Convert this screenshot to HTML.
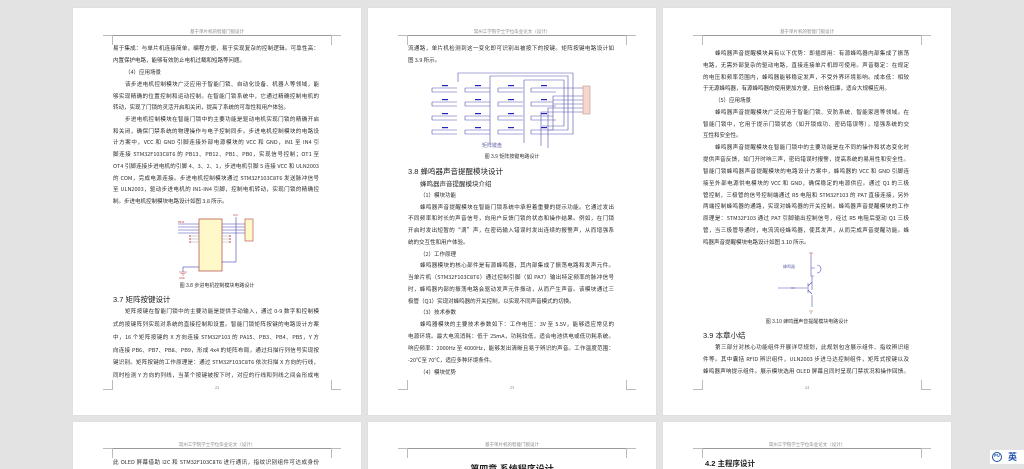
<!DOCTYPE html>
<html><head><meta charset="utf-8">
<style>
*{margin:0;padding:0;box-sizing:border-box}
html,body{width:1024px;height:469px;overflow:hidden}
body{background:#e3e3e3;font-family:"Liberation Serif","Noto Serif CJK SC","Noto Sans CJK SC",serif;position:relative}
.pg{position:absolute;width:288px;background:#fff;box-shadow:0 0 1px #ccc}
.hd{position:absolute;left:0;width:288px;text-align:center;font-size:4.5px;color:#888;font-family:"Liberation Sans","Noto Sans CJK SC",sans-serif}
.hl{position:absolute;left:40px;width:218px;border-top:0.8px solid #999}
.cn{position:absolute;width:10px;height:10px;border-color:#bbb;border-style:solid;border-width:0}
.l{position:absolute;left:40px;width:206px;font-size:5.5px;line-height:7px;color:#2a2a2a;text-align:justify;text-align-last:justify;white-space:nowrap;font-family:"Noto Sans CJK SC","Liberation Serif",sans-serif}
.l.e{text-align-last:left}
.l.i{left:52px;width:194px}
.h{position:absolute;font-size:7.5px;color:#222;font-family:"Liberation Sans","Noto Sans CJK SC",sans-serif}
.c{position:absolute;left:0;width:288px;text-align:center;font-size:5px;color:#333;font-family:"Liberation Sans","Noto Sans CJK SC",sans-serif}
.pn{position:absolute;left:0;width:288px;text-align:center;font-size:4.5px;color:#888}
</style></head><body>

<!-- PAGE 1 -->
<div class="pg" style="left:73px;top:8px;height:407px">
<div class="hd" style="top:21px">基于单片机的智能门锁设计</div>
<div class="hl" style="top:27px"></div>
<div class="cn" style="left:30px;top:27px;border-right-width:0.8px;border-top-width:0.8px"></div>
<div class="cn" style="left:258px;top:27px;border-left-width:0.8px;border-top-width:0.8px"></div>
<div class="l" style="top:37px">易于集成：与单片机连接简单，编程方便，易于实现复杂的控制逻辑。可靠性高：</div>
<div class="l e" style="top:49px">内置保护电路，能够有效防止电机过载和短路等问题。</div>
<div class="l e i" style="top:61px">（4）应用场景</div>
<div class="l i" style="top:73px">该步进电机控制模块广泛应用于智能门锁、自动化设备、机器人等领域，能</div>
<div class="l" style="top:85px">够实现精确的位置控制和运动控制。在智能门锁系统中，它通过精确控制电机的</div>
<div class="l e" style="top:96px">转动，实现了门锁的灵活开启和关闭，提高了系统的可靠性和用户体验。</div>
<div class="l i" style="top:108px">步进电机控制模块在智能门锁中的主要功能是驱动电机实现门锁的精确开启</div>
<div class="l" style="top:120px">和关闭，确保门禁系统的物理操作与电子控制同步。步进电机控制模块的电路设</div>
<div class="l" style="top:131px">计方案中，VCC 和 GND 引脚连接外部电源模块的 VCC 和 GND，IN1 至 IN4 引</div>
<div class="l" style="top:143px">脚连接 STM32F103C8T6 的 PB13、PB12、PB1、PB0，实现信号控制；OT1 至</div>
<div class="l" style="top:155px">OT4 引脚连接步进电机的引脚 4、3、2、1，步进电机引脚 5 连接 VCC 和 ULN2003</div>
<div class="l" style="top:167px">的 COM，完成电源连接。步进电机控制模块通过 STM32F103C8T6 发送脉冲信号</div>
<div class="l" style="top:178px">至 ULN2003，驱动步进电机的 IN1-IN4 引脚，控制电机转动，实现门锁的精确控</div>
<div class="l e" style="top:190px">制。步进电机控制模块电路设计如图 3.8 所示。</div>
<svg style="position:absolute;left:100px;top:205px" width="90" height="70" viewBox="0 0 90 70">
<rect x="26" y="6" width="23" height="52" fill="#fff8c8" stroke="#b04040" stroke-width="0.7"/>
<g stroke="#4040b0" stroke-width="0.6">
<line x1="5" y1="11" x2="26" y2="11"/><line x1="5" y1="14" x2="26" y2="14"/><line x1="5" y1="17" x2="26" y2="17"/><line x1="5" y1="20" x2="26" y2="20"/>
<line x1="49" y1="11" x2="73" y2="11"/><line x1="49" y1="14" x2="73" y2="14"/><line x1="49" y1="17" x2="73" y2="17"/><line x1="49" y1="20" x2="73" y2="20"/>
<line x1="63" y1="4" x2="63" y2="49"/><line x1="49" y1="49" x2="63" y2="49"/>
<line x1="10" y1="54" x2="26" y2="54"/><line x1="10" y1="54" x2="10" y2="59"/>
</g>
<g stroke="#888" stroke-width="0.4"><line x1="18" y1="23" x2="26" y2="23"/><line x1="18" y1="26" x2="26" y2="26"/><line x1="18" y1="29" x2="26" y2="29"/><line x1="49" y1="23" x2="56" y2="23"/><line x1="49" y1="26" x2="56" y2="26"/><line x1="49" y1="29" x2="56" y2="29"/></g>
<g stroke="#c04040" stroke-width="0.5"><path d="M16 22l2 2M18 22l-2 2M16 25l2 2M18 25l-2 2M16 28l2 2M18 28l-2 2M56 22l2 2M58 22l-2 2M56 25l2 2M58 25l-2 2M56 28l2 2M58 28l-2 2"/><path d="M6 59h8M7.5 60.5h5M9 62h2"/></g>
<rect x="72" y="6" width="8" height="22" fill="#fff8c8" stroke="#b04040" stroke-width="0.6"/>
<g fill="#c04040" font-size="2.5" font-family="Liberation Sans"><text x="5" y="10">PB13</text><text x="60" y="3">VCC</text><text x="6" y="66">GND</text></g>
</svg>
<div class="c" style="top:274px">图 3.8 步进电机控制模块电路设计</div>
<div class="h" style="left:40px;top:286px">3.7 矩阵按键设计</div>
<div class="l i" style="top:300px">矩阵按键在智能门锁中的主要功能是提供手动输入，通过 0-9 数字和控制模</div>
<div class="l" style="top:313px">式的按键阵列实现对系统的直接控制和设置。智能门锁矩阵按键的电路设计方案</div>
<div class="l" style="top:326px">中，16 个矩阵按键的 X 方向连接 STM32F103 的 PA15、PB3、PB4、PB5，Y 方</div>
<div class="l" style="top:339px">向连接 PB6、PB7、PB8、PB9，形成 4x4 的矩阵布局，通过扫描行列信号实现按</div>
<div class="l" style="top:351px">键识别。矩阵按键的工作原理是：通过 STM32F103C8T6 依次扫描 X 方向的行线，</div>
<div class="l" style="top:364px">同时检测 Y 方向的列线，当某个按键被按下时，对应的行线和列线之间会形成电</div>
<div class="cn" style="left:30px;top:372px;border-right-width:0.8px;border-bottom-width:0.8px"></div>
<div class="cn" style="left:258px;top:372px;border-left-width:0.8px;border-bottom-width:0.8px"></div>
<div class="pn" style="top:377px">22</div>
</div>

<!-- PAGE 2 -->
<div class="pg" style="left:368px;top:8px;height:407px">
<div class="hd" style="top:21px">常州工学院学士学位毕业论文（设计）</div>
<div class="hl" style="top:27px"></div>
<div class="cn" style="left:30px;top:27px;border-right-width:0.8px;border-top-width:0.8px"></div>
<div class="cn" style="left:258px;top:27px;border-left-width:0.8px;border-top-width:0.8px"></div>
<div class="l" style="top:37px">流通路，单片机检测到这一变化即可识别出被按下的按键。矩阵按键电路设计如</div>
<div class="l e" style="top:49px">图 3.9 所示。</div>
<svg style="position:absolute;left:60px;top:62px" width="170" height="78" viewBox="0 0 170 78">
<g stroke="#5050b0" stroke-width="0.6" fill="none">
<path d="M30 12V3H145V64H128"/><path d="M62 74V6H140V60H120"/><path d="M96 73V10H136V56H114"/>
<path d="M4 18h25M37 18h25M70 18h25M103 18h22"/><path d="M4 32h25M37 32h25M70 32h25M103 32h22"/>
<path d="M4 46h25M37 46h25M70 46h25M103 46h22"/><path d="M4 60h25M37 60h25M70 60h25M103 60h22"/>
<path d="M4 18v4h25M37 18v4h25M70 18v4h25M103 18v4h25M4 32v4h25M37 32v4h25M70 32v4h25M103 32v4h25M4 46v4h25M37 46v4h25M70 46v4h25M103 46v4h25M4 60v4h25M37 60v4h25M70 60v4h25M103 60v4h25"/>
<path d="M125 18h30M125 32v-6h30M125 46v-16h30M125 60v-26h30M120 78V38h35M113 76V42h42"/>
</g>
<g fill="#2020c0"><rect x="14" y="15" width="6" height="1.2"/><rect x="47" y="15" width="6" height="1.2"/><rect x="80" y="15" width="6" height="1.2"/><rect x="113" y="15" width="6" height="1.2"/><rect x="14" y="29" width="6" height="1.2"/><rect x="47" y="29" width="6" height="1.2"/><rect x="80" y="29" width="6" height="1.2"/><rect x="113" y="29" width="6" height="1.2"/><rect x="14" y="43" width="6" height="1.2"/><rect x="47" y="43" width="6" height="1.2"/><rect x="80" y="43" width="6" height="1.2"/><rect x="113" y="43" width="6" height="1.2"/><rect x="14" y="57" width="6" height="1.2"/><rect x="47" y="57" width="6" height="1.2"/><rect x="80" y="57" width="6" height="1.2"/><rect x="113" y="57" width="6" height="1.2"/></g>
<rect x="155" y="16" width="7" height="28" fill="#f4d8d0" stroke="#c08070" stroke-width="0.5"/>
</svg>
<div class="c" style="top:134px;color:#6a6ab0;left:-20px">矩阵键盘</div>
<div class="c" style="top:145px">图 3.9 矩阵按键电路设计</div>
<div class="h" style="left:40px;top:158px">3.8 蜂鸣器声音提醒模块设计</div>
<div class="l e i" style="top:172px;font-size:6.5px">蜂鸣器声音提醒模块介绍</div>
<div class="l e i" style="top:184px">（1）模块功能</div>
<div class="l i" style="top:196px">蜂鸣器声音提醒模块在智能门锁系统中承担着重要的提示功能。它通过发出</div>
<div class="l" style="top:207px">不同频率和时长的声音信号，向用户反馈门锁的状态和操作结果。例如，在门锁</div>
<div class="l" style="top:219px">开启时发出短暂的“滴”声，在密码输入错误时发出连续的报警声，从而增强系</div>
<div class="l e" style="top:231px">统的交互性和用户体验。</div>
<div class="l e i" style="top:243px">（2）工作原理</div>
<div class="l i" style="top:254px">蜂鸣器模块的核心部件是有源蜂鸣器，其内部集成了振荡电路和发声元件。</div>
<div class="l" style="top:266px">当单片机（STM32F103C8T6）通过控制引脚（如 PA7）输出特定频率的脉冲信号</div>
<div class="l" style="top:278px">时，蜂鸣器内部的振荡电路会驱动发声元件振动，从而产生声音。该模块通过三</div>
<div class="l e" style="top:290px">极管（Q1）实现对蜂鸣器的开关控制，以实现不同声音模式的切换。</div>
<div class="l e i" style="top:301px">（3）技术参数</div>
<div class="l i" style="top:313px">蜂鸣器模块的主要技术参数如下：工作电压：3V 至 5.5V，能够适应常见的</div>
<div class="l" style="top:325px">电源环境。最大电流消耗：低于 25mA，功耗较低，适合电池供电或低功耗系统。</div>
<div class="l" style="top:337px">响应频率：2000Hz 至 4000Hz，能够发出清晰且易于辨识的声音。工作温度范围：</div>
<div class="l e" style="top:349px">-20℃至 70℃，适应多种环境条件。</div>
<div class="l e i" style="top:361px">（4）模块优势</div>
<div class="cn" style="left:30px;top:372px;border-right-width:0.8px;border-bottom-width:0.8px"></div>
<div class="cn" style="left:258px;top:372px;border-left-width:0.8px;border-bottom-width:0.8px"></div>
<div class="pn" style="top:377px">23</div>
</div>

<!-- PAGE 3 -->
<div class="pg" style="left:663px;top:8px;height:407px">
<div class="hd" style="top:21px">基于单片机的智能门锁设计</div>
<div class="hl" style="top:27px"></div>
<div class="cn" style="left:30px;top:27px;border-right-width:0.8px;border-top-width:0.8px"></div>
<div class="cn" style="left:258px;top:27px;border-left-width:0.8px;border-top-width:0.8px"></div>
<div class="l i" style="top:42px">蜂鸣器声音提醒模块具有以下优势：即插即用：有源蜂鸣器内部集成了振荡</div>
<div class="l" style="top:54px">电路，无需外部复杂的驱动电路，直接连接单片机即可使用。声音稳定：在规定</div>
<div class="l" style="top:66px">的电压和频率范围内，蜂鸣器能够稳定发声，不受外界环境影响。成本低：相较</div>
<div class="l e" style="top:77px">于无源蜂鸣器，有源蜂鸣器的使用更加方便，且价格低廉，适合大规模应用。</div>
<div class="l e i" style="top:89px">（5）应用场景</div>
<div class="l i" style="top:101px">蜂鸣器声音提醒模块广泛应用于智能门锁、安防系统、智能家居等领域。在</div>
<div class="l" style="top:113px">智能门锁中，它用于提示门锁状态（如开锁成功、密码错误等），增强系统的交</div>
<div class="l e" style="top:124px">互性和安全性。</div>
<div class="l i" style="top:136px">蜂鸣器声音提醒模块在智能门锁中的主要功能是在不同的操作和状态变化时</div>
<div class="l" style="top:148px">提供声音反馈，如门开时响三声，密码错误时报警，提高系统的易用性和安全性。</div>
<div class="l" style="top:160px">智能门锁蜂鸣器声音提醒模块的电路设计方案中，蜂鸣器的 VCC 和 GND 引脚连</div>
<div class="l" style="top:172px">接至外部电源供电模块的 VCC 和 GND，确保稳定的电源供应。通过 Q1 的三极</div>
<div class="l" style="top:184px">管控制，三极管的信号控制端通过 R5 电阻和 STM32F103 的 PA7 直接连接，另外</div>
<div class="l" style="top:195px">两端控制蜂鸣器的通路，实现对蜂鸣器的开关控制。蜂鸣器声音提醒模块的工作</div>
<div class="l" style="top:207px">原理是：STM32F103 通过 PA7 引脚输出控制信号，经过 R5 电阻后驱动 Q1 三极</div>
<div class="l" style="top:219px">管，当三极管导通时，电流流经蜂鸣器，使其发声，从而完成声音提醒功能。蜂</div>
<div class="l e" style="top:231px">鸣器声音提醒模块电路设计如图 3.10 所示。</div>
<svg style="position:absolute;left:110px;top:243px" width="60" height="64" viewBox="0 0 60 64">
<g stroke="#a05050" stroke-width="0.6" fill="none"><path d="M36 2h4M38 2v3M36 60h4M37 62h2"/></g>
<g stroke="#5050b0" stroke-width="0.6" fill="none">
<path d="M38 5v12h4M38 17v8h3M44 14a4 4 0 0 1 0 8"/><path d="M39 25v14M5 37h13M22 37h12"/>
<path d="M35 32v10M35 35l4-4M35 39l4 4M39 44v12"/>
</g>
<path d="M18 36l1 2 1-2 1 2 1-2" stroke="#5050b0" stroke-width="0.5" fill="none"/>
<text x="10" y="17" font-size="4" fill="#6a6ab0" font-family="Noto Sans CJK SC">蜂鸣器</text>
</svg>
<div class="c" style="top:310px">图 3.10 蜂鸣器声音提醒模块电路设计</div>
<div class="h" style="left:40px;top:322px">3.9 本章小结</div>
<div class="l i" style="top:336px">第三部分对核心功能组件开展详尽规划，此规划包含展示组件、指纹辨识组</div>
<div class="l" style="top:348px">件等。其中囊括 RFID 辨识组件，ULN2003 步进马达控制组件，矩阵式按键以及</div>
<div class="l" style="top:360px">蜂鸣器声响提示组件。展示模块选用 OLED 屏幕且同时呈现门禁状况和操作回馈。</div>
<div class="cn" style="left:30px;top:372px;border-right-width:0.8px;border-bottom-width:0.8px"></div>
<div class="cn" style="left:258px;top:372px;border-left-width:0.8px;border-bottom-width:0.8px"></div>
<div class="pn" style="top:377px">24</div>
</div>

<!-- ROW 2 -->
<div class="pg" style="left:73px;top:422px;height:47px">
<div class="hd" style="top:20px">常州工学院学士学位毕业论文（设计）</div>
<div class="hl" style="top:26px"></div>
<div class="cn" style="left:30px;top:26px;border-right-width:0.8px;border-top-width:0.8px"></div>
<div class="cn" style="left:258px;top:26px;border-left-width:0.8px;border-top-width:0.8px"></div>
<div class="l" style="top:37px">此 OLED 屏幕借助 I2C 和 STM32F103C8T6 进行通讯，指纹识别组件可达成身份</div>
</div>
<div class="pg" style="left:368px;top:422px;height:47px">
<div class="hd" style="top:20px">基于单片机的智能门锁设计</div>
<div class="hl" style="top:26px"></div>
<div class="cn" style="left:30px;top:26px;border-right-width:0.8px;border-top-width:0.8px"></div>
<div class="cn" style="left:258px;top:26px;border-left-width:0.8px;border-top-width:0.8px"></div>
<div class="c" style="top:40px;font-size:9px;font-weight:bold;color:#222">第四章 系统程序设计</div>
</div>
<div class="pg" style="left:663px;top:422px;height:47px">
<div class="hd" style="top:20px">常州工学院学士学位毕业论文（设计）</div>
<div class="hl" style="top:26px"></div>
<div class="cn" style="left:30px;top:26px;border-right-width:0.8px;border-top-width:0.8px"></div>
<div class="cn" style="left:258px;top:26px;border-left-width:0.8px;border-top-width:0.8px"></div>
<div class="h" style="left:42px;top:36px;font-weight:bold">4.2 主程序设计</div>
</div>

<!-- IME -->
<div style="position:absolute;left:990px;top:450px;width:34px;height:14px;background:#fff;font-family:'Noto Sans CJK SC',sans-serif;font-size:9px;color:#1e4fa8;font-weight:bold">
<span style="position:absolute;left:2px;top:2px;width:10px;height:10px;border:1.3px solid #1e4fa8;border-radius:50%;font-size:4px;line-height:7px;text-align:center">PU</span>
<span style="position:absolute;left:18px;top:0px">英</span></div>
</body></html>
